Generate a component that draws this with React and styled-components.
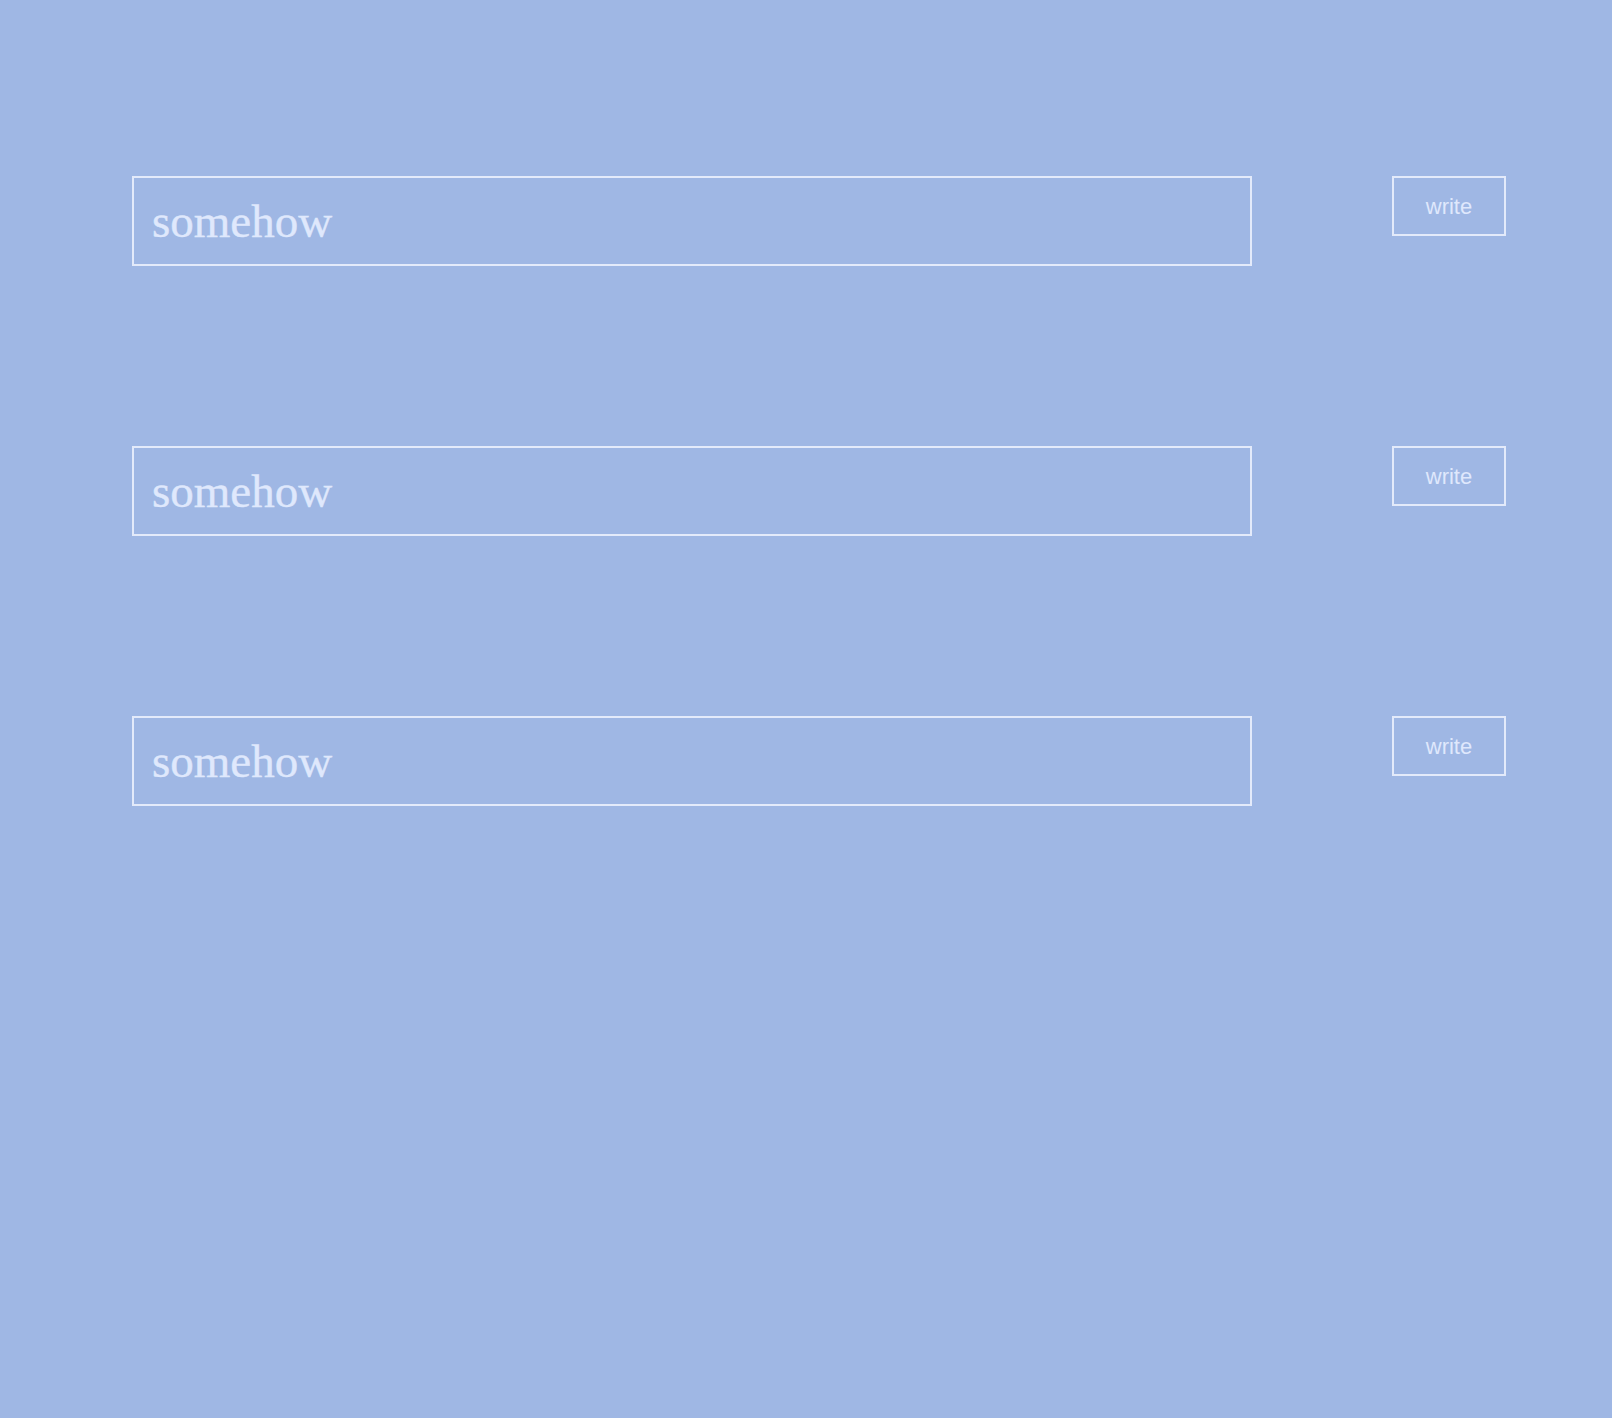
import React from 'react'
import styled, { createGlobalStyle } from 'styled-components'

const GlobalStyle = createGlobalStyle`
  html, body {
    margin: 0;
    padding: 0;
    background: #9fb7e4;
  }
  body {
    min-height: 1418px;
  }
`

const Page = styled.div`
  min-height: 1418px;
  padding: 176px 0 0 132px;
  box-sizing: border-box;
  display: flex;
  flex-direction: column;
  gap: 180px;
`

const Row = styled.div`
  display: flex;
  align-items: flex-start;
  gap: 140px;
`

const Field = styled.input`
  width: 1120px;
  height: 90px;
  box-sizing: border-box;
  margin: 0;
  padding: 0 0 0 18px;
  background: transparent;
  border: 2px solid #e3eafa;
  outline: none;
  font-family: "Liberation Serif", "Times New Roman", serif;
  font-size: 47px;
  color: #dfe8fc;
  -webkit-text-stroke: 0.4px #dfe8fc;
  &::placeholder {
    color: #dfe8fc;
    opacity: 1;
  }
`

const WriteButton = styled.button`
  width: 114px;
  height: 60px;
  box-sizing: border-box;
  margin: 0;
  padding: 2px 0 0;
  background: transparent;
  border: 2px solid #e3eafa;
  font-family: "Liberation Sans", Arial, sans-serif;
  font-size: 22px;
  color: #dfe8fc;
  cursor: pointer;
`

export default function App() {
  const rows = [1, 2, 3]
  return (
    <>
      <GlobalStyle />
      <Page>
        {rows.map((n) => (
          <Row key={n}>
            <Field placeholder="somehow" />
            <WriteButton>write</WriteButton>
          </Row>
        ))}
      </Page>
    </>
  )
}
